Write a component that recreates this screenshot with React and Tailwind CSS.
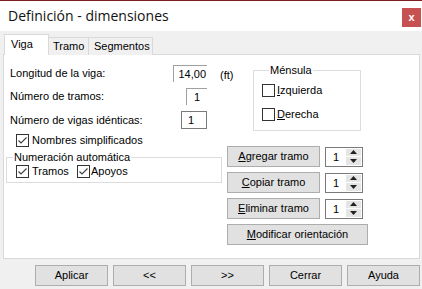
import React from "react";

const Check = ({ checked }) => (
  <span className="w-[13px] h-[13px] border border-[#333333] bg-white flex items-center justify-center shrink-0">
    {checked && (
      <svg width="11" height="11" viewBox="0 0 11 11">
        <path d="M1.5 5.5 L4 8 L9.5 2.5" fill="none" stroke="#3c3c3c" strokeWidth="1.1" />
      </svg>
    )}
  </span>
);

const Btn = ({ w, children }) => (
  <button className={`${w} h-[21px] bg-[#e1e1e1] border border-[#adadad] flex items-center justify-center leading-none text-black`}>
    {children}
  </button>
);

const Spin = () => (
  <div className="w-[38px] h-[20px] border border-[#7a7a7a] bg-white flex">
    <span className="flex-1 pl-[7px] leading-[18px]">1</span>
    <div className="w-[16px] flex flex-col py-[1px] pr-[1px] gap-px">
      <span className="flex-1 bg-[#e5e5e5] flex items-center justify-center">
        <svg width="7" height="4" viewBox="0 0 7 4"><path d="M0 4 L3.5 0 L7 4 Z" fill="#222" /></svg>
      </span>
      <span className="flex-1 bg-[#e5e5e5] flex items-center justify-center">
        <svg width="7" height="4" viewBox="0 0 7 4"><path d="M0 0 L3.5 4 L7 0 Z" fill="#222" /></svg>
      </span>
    </div>
  </div>
);

export default function App() {
  return (
    <div className="w-[422px] h-[289px] bg-[#f0f0f0] flex flex-col overflow-hidden font-['Liberation_Sans',Arial,sans-serif] text-[11px] text-black">
      <div className="h-px bg-[#7a1e1e]" />
      {/* title bar */}
      <div className="h-[30px] bg-white flex items-start">
        <span className="self-center pl-[8px] font-['Open_Sans',sans-serif] text-[14px] leading-none text-[#111]">
          Definición - dimensiones
        </span>
        <span className="ml-auto mt-[7px] mr-[1px] w-[19px] h-[19px] bg-[#c75050] text-white font-bold text-[11px] flex items-center justify-center leading-none">
          x
        </span>
      </div>

      {/* tabs */}
      <div className="pt-[3px] px-[3px]">
        <div className="flex items-end pl-[1px] h-[21px] -mb-px relative z-10">
          <div className="w-[45px] h-[21px] bg-white border border-b-0 border-[#d9d9d9] pl-[6px] pt-[3px] leading-[13px]">Viga</div>
          <div className="w-[40px] h-[18px] bg-[#f0f0f0] border-t border-r border-[#d9d9d9] pl-[4px] pt-[2px] leading-[13px]">Tramo</div>
          <div className="w-[64px] h-[18px] bg-[#f0f0f0] border-t border-r border-[#d9d9d9] pl-[5px] pt-[2px] leading-[13px]">Segmentos</div>
        </div>

        {/* panel */}
        <div className="w-[417px] h-[205px] bg-white border border-[#d9d9d9] flex">
          {/* left column */}
          <div className="w-[216px] shrink-0 pt-[10px] flex flex-col">
            <div className="w-[203px] h-[17px] flex items-center">
              <span className="pl-[6px] flex-1">Longitud de la viga:</span>
              <span className="w-[34px] h-[17px] border-l border-t border-[#a0a0a0] text-right pr-[1px] leading-[16px]">14,00</span>
            </div>
            <div className="w-[203px] h-[17px] mt-[6px] flex items-center">
              <span className="pl-[6px] flex-1">Número de tramos:</span>
              <span className="w-[21px] h-[17px] border-l border-t border-[#a0a0a0] text-center leading-[16px]">1</span>
            </div>
            <div className="w-[203px] h-[18px] mt-[6px] flex items-center">
              <span className="pl-[6px] flex-1">Número de vigas idénticas:</span>
              <span className="w-[26px] h-[18px] border border-[#7a7a7a] pl-[6px] leading-[16px]">1</span>
            </div>
            <div className="mt-[5px] pl-[12px] h-[13px] flex items-center">
              <Check checked />
              <span className="ml-[3px] leading-[13px]">Nombres simplificados</span>
            </div>
            <fieldset className="ml-[2px] mt-[4px] w-[216px] border border-[#dcdcdc] pb-[4px]">
              <legend className="ml-[6px] px-[1px] leading-[13px]">Numeración automática</legend>
              <div className="flex pl-[9px] mt-[1px]">
                <div className="w-[61px] flex items-center">
                  <Check checked />
                  <span className="ml-[3px] leading-[13px]">Tramos</span>
                </div>
                <div className="flex items-center">
                  <Check checked />
                  <span className="ml-[1px] leading-[13px]">Apoyos</span>
                </div>
              </div>
            </fieldset>
          </div>

          {/* right column */}
          <div className="flex flex-col">
            <div className="flex items-start">
              <span className="w-[33px] mt-[14px] leading-[13px]">(ft)</span>
              <fieldset className="mt-[9px] w-[108px] border border-[#dcdcdc] pl-[8px] pb-[9px]">
                <legend className="ml-[7px] px-[1px] leading-[13px]">Ménsula</legend>
                <div className="flex items-center mt-[7px]">
                  <Check />
                  <span className="ml-[2px] leading-[13px]"><span className="underline underline-offset-1">I</span>zquierda</span>
                </div>
                <div className="flex items-center mt-[11px]">
                  <Check />
                  <span className="ml-[2px] leading-[13px]"><span className="underline underline-offset-1">D</span>erecha</span>
                </div>
              </fieldset>
            </div>

            <div className="ml-[7px] mt-[15px] flex flex-col gap-[5px]">
              <div className="flex items-center gap-[5px]">
                <Btn w="w-[93px]"><span className="underline underline-offset-1">A</span>gregar tramo</Btn>
                <Spin />
              </div>
              <div className="flex items-center gap-[5px]">
                <Btn w="w-[93px]"><span className="underline underline-offset-1">C</span>opiar tramo</Btn>
                <Spin />
              </div>
              <div className="flex items-center gap-[5px]">
                <Btn w="w-[93px]"><span className="underline underline-offset-1">E</span>liminar tramo</Btn>
                <Spin />
              </div>
              <Btn w="w-[141px]"><span className="underline underline-offset-1">M</span>odificar orientación</Btn>
            </div>
          </div>
        </div>
      </div>

      {/* bottom buttons */}
      <div className="mt-[6px] pr-[2px] flex justify-end gap-[5px]">
        <Btn w="w-[73px]">Aplicar</Btn>
        <Btn w="w-[73px]">&lt;&lt;</Btn>
        <Btn w="w-[73px]">&gt;&gt;</Btn>
        <Btn w="w-[73px]">Cerrar</Btn>
        <Btn w="w-[73px]">Ayuda</Btn>
      </div>
    </div>
  );
}
